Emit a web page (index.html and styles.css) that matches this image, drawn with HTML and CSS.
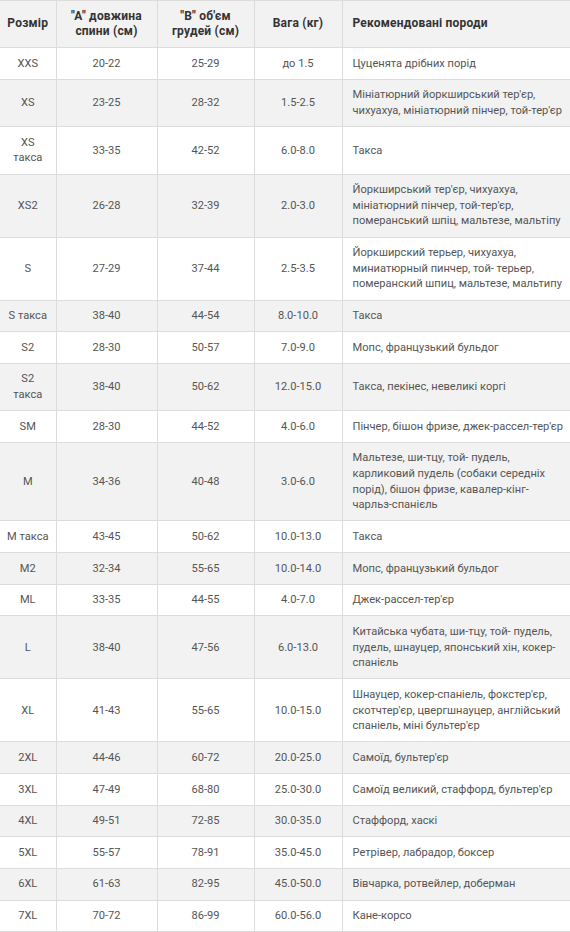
FILE: index.html
```html
<!DOCTYPE html>
<html lang="uk">
<head>
<meta charset="utf-8">
<link rel="stylesheet" href="styles.css">
</head>
<body>
<table class="sizes">
  <colgroup>
    <col class="c-size"><col class="c-back"><col class="c-chest"><col class="c-weight"><col class="c-breed">
  </colgroup>
  <thead>
    <tr><th>Розмір</th><th>"A" довжина<br>спини (см)</th><th>"B" об'єм<br>грудей (см)</th><th>Вага (кг)</th><th class="breed">Рекомендовані породи</th></tr>
  </thead>
  <tbody>
    <tr><td>XXS</td><td>20-22</td><td>25-29</td><td>до 1.5</td><td class="breed">Цуценята дрібних порід</td></tr>
    <tr><td>XS</td><td>23-25</td><td>28-32</td><td>1.5-2.5</td><td class="breed">Мініатюрний йоркширський тер'єр,<br>чихуахуа, мініатюрний пінчер, той-тер'єр</td></tr>
    <tr><td>XS<br>такса</td><td>33-35</td><td>42-52</td><td>6.0-8.0</td><td class="breed">Такса</td></tr>
    <tr><td>XS2</td><td>26-28</td><td>32-39</td><td>2.0-3.0</td><td class="breed">Йоркширський тер'єр, чихуахуа,<br>мініатюрний пінчер, той-тер'єр,<br>померанський шпіц, мальтезе, мальтіпу</td></tr>
    <tr><td>S</td><td>27-29</td><td>37-44</td><td>2.5-3.5</td><td class="breed">Йоркширский терьер, чихуахуа,<br>миниатюрный пинчер, той- терьер,<br>померанский шпиц, мальтезе, мальтипу</td></tr>
    <tr><td>S такса</td><td>38-40</td><td>44-54</td><td>8.0-10.0</td><td class="breed">Такса</td></tr>
    <tr><td>S2</td><td>28-30</td><td>50-57</td><td>7.0-9.0</td><td class="breed">Мопс, французький бульдог</td></tr>
    <tr><td>S2<br>такса</td><td>38-40</td><td>50-62</td><td>12.0-15.0</td><td class="breed">Такса, пекінес, невеликі коргі</td></tr>
    <tr><td>SM</td><td>28-30</td><td>44-52</td><td>4.0-6.0</td><td class="breed">Пінчер, бішон фризе, джек-рассел-тер'єр</td></tr>
    <tr><td>M</td><td>34-36</td><td>40-48</td><td>3.0-6.0</td><td class="breed">Мальтезе, ши-тцу, той- пудель,<br>карликовий пудель (собаки середніх<br>порід), бішон фризе, кавалер-кінг-<br>чарльз-спанієль</td></tr>
    <tr><td>M такса</td><td>43-45</td><td>50-62</td><td>10.0-13.0</td><td class="breed">Такса</td></tr>
    <tr><td>M2</td><td>32-34</td><td>55-65</td><td>10.0-14.0</td><td class="breed">Мопс, французький бульдог</td></tr>
    <tr><td>ML</td><td>33-35</td><td>44-55</td><td>4.0-7.0</td><td class="breed">Джек-рассел-тер'єр</td></tr>
    <tr><td>L</td><td>38-40</td><td>47-56</td><td>6.0-13.0</td><td class="breed">Китайська чубата, ши-тцу, той- пудель,<br>пудель, шнауцер, японський хін, кокер-<br>спанієль</td></tr>
    <tr><td>XL</td><td>41-43</td><td>55-65</td><td>10.0-15.0</td><td class="breed">Шнауцер, кокер-спаніель, фокстер'єр,<br>скотчтер'єр, цвергшнауцер, англійський<br>спаніель, міні бультер'єр</td></tr>
    <tr><td>2XL</td><td>44-46</td><td>60-72</td><td>20.0-25.0</td><td class="breed">Самоїд, бультер'єр</td></tr>
    <tr><td>3XL</td><td>47-49</td><td>68-80</td><td>25.0-30.0</td><td class="breed">Самоїд великий, стаффорд, бультер'єр</td></tr>
    <tr><td>4XL</td><td>49-51</td><td>72-85</td><td>30.0-35.0</td><td class="breed">Стаффорд, хаскі</td></tr>
    <tr><td>5XL</td><td>55-57</td><td>78-91</td><td>35.0-45.0</td><td class="breed">Ретрівер, лабрадор, боксер</td></tr>
    <tr><td>6XL</td><td>61-63</td><td>82-95</td><td>45.0-50.0</td><td class="breed">Вівчарка, ротвейлер, доберман</td></tr>
    <tr><td>7XL</td><td>70-72</td><td>86-99</td><td>60.0-56.0</td><td class="breed">Кане-корсо</td></tr>
  </tbody>
</table>
</body>
</html>
```

FILE: styles.css
```css
html, body {
  margin: 0;
  padding: 0;
  background: #fff;
}

.sizes {
  border-collapse: collapse;
  table-layout: fixed;
  width: 570px;
  font-family: Roboto, "Noto Sans", sans-serif;
  font-size: 11.1px;
  line-height: 15.65px;
  color: #555;
}

.c-size { width: 56px; }
.c-back { width: 101px; }
.c-chest { width: 97px; }
.c-weight { width: 88px; }
.c-breed { width: 228px; }

.sizes th,
.sizes td {
  border: 1px solid #dcdcdc;
  padding: 7.5px 2px;
  text-align: center;
  vertical-align: middle;
}

.sizes th:first-child,
.sizes td:first-child {
  border-left: none;
}

.sizes th:last-child,
.sizes td:last-child {
  border-right: none;
}

.sizes th {
  font-size: 12px;
  font-weight: 700;
  letter-spacing: 0.2px;
  color: #333;
  background: #f2f2f2;
}

.sizes th.breed,
.sizes td.breed {
  text-align: left;
  padding-left: 10px;
  padding-right: 0;
  white-space: nowrap;
  overflow: hidden;
}

.sizes tbody tr:nth-child(even) {
  background: #f2f2f2;
}
```
